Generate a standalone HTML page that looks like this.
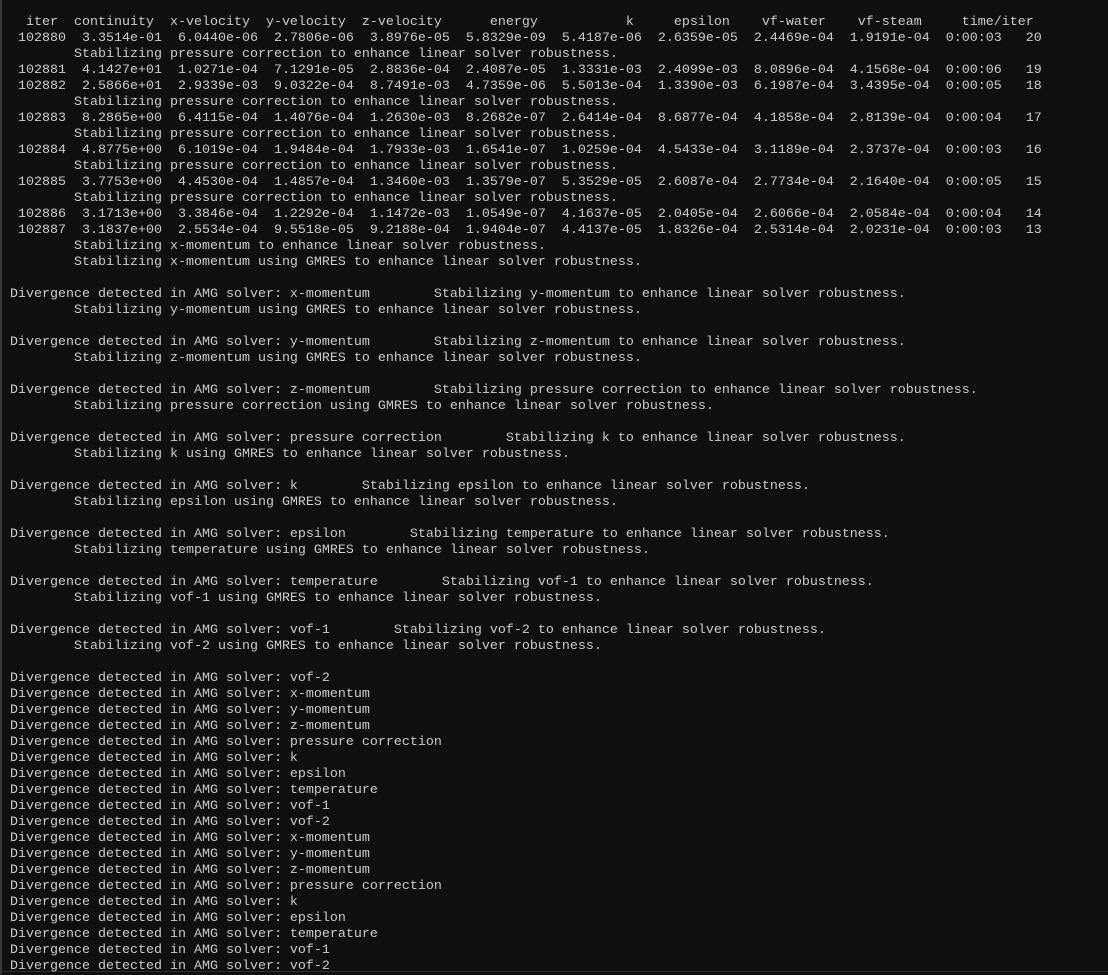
<!DOCTYPE html>
<html><head><meta charset="utf-8"><style>
html,body{margin:0;padding:0;background:#0f0f0f;}
body{width:1108px;height:974px;overflow:hidden;position:relative;}
.bl{position:absolute;left:0;top:0;width:2px;height:974px;background:#3a3a3a;}
.bb{position:absolute;left:0;top:971px;width:1108px;height:1px;background:#2e2e2e;}
pre{position:absolute;left:10px;top:14.5px;margin:0;font-family:"Liberation Mono",monospace;font-size:13.33px;line-height:16px;color:#cccccc;white-space:pre;}
</style></head><body>
<div class="bl"></div><div class="bb"></div>
<pre>  iter  continuity  x-velocity  y-velocity  z-velocity      energy           k     epsilon    vf-water    vf-steam     time/iter
 102880  3.3514e-01  6.0440e-06  2.7806e-06  3.8976e-05  5.8329e-09  5.4187e-06  2.6359e-05  2.4469e-04  1.9191e-04  0:00:03   20
        Stabilizing pressure correction to enhance linear solver robustness.
 102881  4.1427e+01  1.0271e-04  7.1291e-05  2.8836e-04  2.4087e-05  1.3331e-03  2.4099e-03  8.0896e-04  4.1568e-04  0:00:06   19
 102882  2.5866e+01  2.9339e-03  9.0322e-04  8.7491e-03  4.7359e-06  5.5013e-04  1.3390e-03  6.1987e-04  3.4395e-04  0:00:05   18
        Stabilizing pressure correction to enhance linear solver robustness.
 102883  8.2865e+00  6.4115e-04  1.4076e-04  1.2630e-03  8.2682e-07  2.6414e-04  8.6877e-04  4.1858e-04  2.8139e-04  0:00:04   17
        Stabilizing pressure correction to enhance linear solver robustness.
 102884  4.8775e+00  6.1019e-04  1.9484e-04  1.7933e-03  1.6541e-07  1.0259e-04  4.5433e-04  3.1189e-04  2.3737e-04  0:00:03   16
        Stabilizing pressure correction to enhance linear solver robustness.
 102885  3.7753e+00  4.4530e-04  1.4857e-04  1.3460e-03  1.3579e-07  5.3529e-05  2.6087e-04  2.7734e-04  2.1640e-04  0:00:05   15
        Stabilizing pressure correction to enhance linear solver robustness.
 102886  3.1713e+00  3.3846e-04  1.2292e-04  1.1472e-03  1.0549e-07  4.1637e-05  2.0405e-04  2.6066e-04  2.0584e-04  0:00:04   14
 102887  3.1837e+00  2.5534e-04  9.5518e-05  9.2188e-04  1.9404e-07  4.4137e-05  1.8326e-04  2.5314e-04  2.0231e-04  0:00:03   13
        Stabilizing x-momentum to enhance linear solver robustness.
        Stabilizing x-momentum using GMRES to enhance linear solver robustness.

Divergence detected in AMG solver: x-momentum        Stabilizing y-momentum to enhance linear solver robustness.
        Stabilizing y-momentum using GMRES to enhance linear solver robustness.

Divergence detected in AMG solver: y-momentum        Stabilizing z-momentum to enhance linear solver robustness.
        Stabilizing z-momentum using GMRES to enhance linear solver robustness.

Divergence detected in AMG solver: z-momentum        Stabilizing pressure correction to enhance linear solver robustness.
        Stabilizing pressure correction using GMRES to enhance linear solver robustness.

Divergence detected in AMG solver: pressure correction        Stabilizing k to enhance linear solver robustness.
        Stabilizing k using GMRES to enhance linear solver robustness.

Divergence detected in AMG solver: k        Stabilizing epsilon to enhance linear solver robustness.
        Stabilizing epsilon using GMRES to enhance linear solver robustness.

Divergence detected in AMG solver: epsilon        Stabilizing temperature to enhance linear solver robustness.
        Stabilizing temperature using GMRES to enhance linear solver robustness.

Divergence detected in AMG solver: temperature        Stabilizing vof-1 to enhance linear solver robustness.
        Stabilizing vof-1 using GMRES to enhance linear solver robustness.

Divergence detected in AMG solver: vof-1        Stabilizing vof-2 to enhance linear solver robustness.
        Stabilizing vof-2 using GMRES to enhance linear solver robustness.

Divergence detected in AMG solver: vof-2
Divergence detected in AMG solver: x-momentum
Divergence detected in AMG solver: y-momentum
Divergence detected in AMG solver: z-momentum
Divergence detected in AMG solver: pressure correction
Divergence detected in AMG solver: k
Divergence detected in AMG solver: epsilon
Divergence detected in AMG solver: temperature
Divergence detected in AMG solver: vof-1
Divergence detected in AMG solver: vof-2
Divergence detected in AMG solver: x-momentum
Divergence detected in AMG solver: y-momentum
Divergence detected in AMG solver: z-momentum
Divergence detected in AMG solver: pressure correction
Divergence detected in AMG solver: k
Divergence detected in AMG solver: epsilon
Divergence detected in AMG solver: temperature
Divergence detected in AMG solver: vof-1
Divergence detected in AMG solver: vof-2</pre>
</body></html>
